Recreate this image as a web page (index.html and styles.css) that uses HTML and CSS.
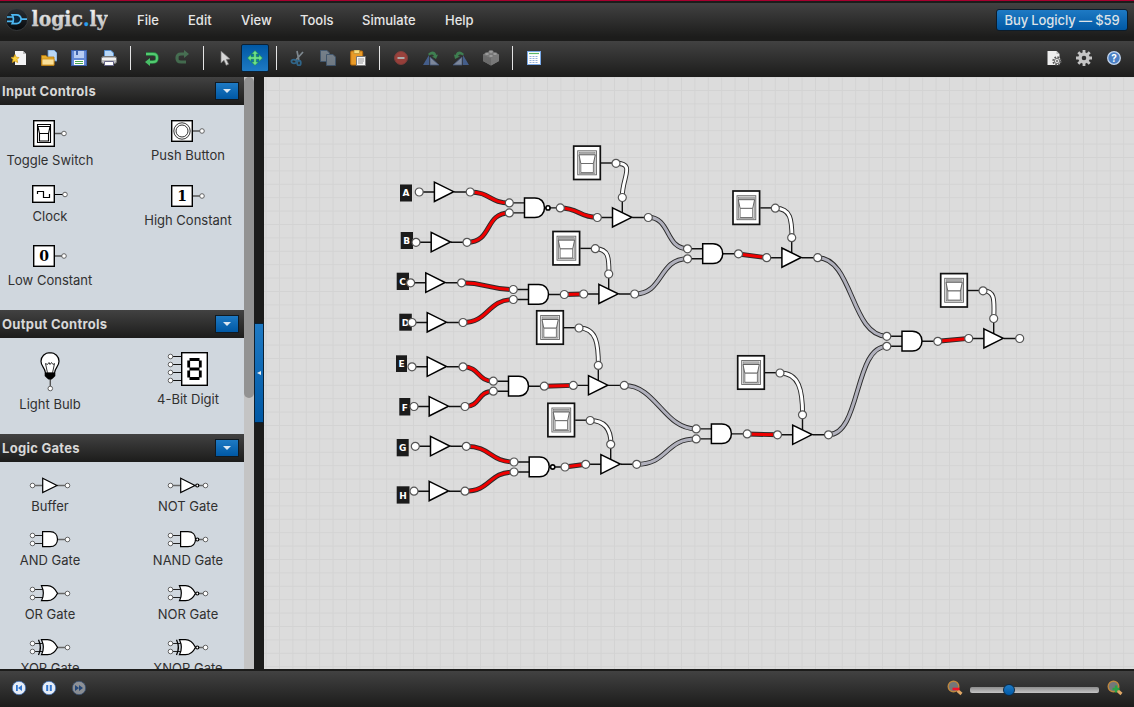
FILE: index.html
```html
<!DOCTYPE html>
<html lang="en">
<head>
<meta charset="utf-8">
<title>Logicly</title>
<link rel="stylesheet" href="styles.css">
</head>
<body>
<svg class="defs" width="0" height="0">
  <defs>
    <linearGradient id="silver" x1="0" y1="0" x2="0" y2="1"><stop offset="0" stop-color="#ffffff"/><stop offset="1" stop-color="#b0b0b0"/></linearGradient>
    <linearGradient id="ink" x1="0" y1="0" x2="0" y2="1"><stop offset="0" stop-color="#2a3036"/><stop offset="1" stop-color="#05080b"/></linearGradient>
    <circle id="port" r="4" fill="#fff" stroke="#555" stroke-width="1.2"/>
    <g id="buffer">
      <path class="lead" d="M0 0H16M35 0H51"/>
      <path class="body" d="M15.2 -9.9L34.5 -.3L15.2 9.5Z"/>
      <use href="#port"/><use href="#port" x="51"/>
    </g>
    <g id="tristate">
      <path class="lead" d="M25 -20V-4M0 0H16M35 0H51"/>
      <path class="body" d="M15.2 -9.7L34.500 -.2L15.2 9.5Z"/>
      <use href="#port"/><use href="#port" x="51"/><use href="#port" x="25" y="-20"/>
    </g>
    <g id="and">
      <path class="lead" d="M0 -5H16M0 5H16M35 0H51"/>
      <path class="body" d="M15.2 -10H25.500C31.500 -10 35.2 -6 35.2 -.2S31.500 9.7 25.500 9.7H15.2Z"/>
      <use href="#port" y="-5"/><use href="#port" y="5"/><use href="#port" x="51"/>
    </g>
    <g id="nand">
      <use href="#and"/>
      <circle cx="38.700" r="2.1" fill="#fff" stroke="#000" stroke-width="1.6"/>
    </g>
    <g id="switch">
      <path class="lead" d="M-15 -.3H0"/>
      <rect x="-42.300" y="-17.200" width="26.600" height="33.400" fill="#fff" stroke="#111" stroke-width="1.700"/>
      <rect x="-38.300" y="-12.500" width="18.800" height="24" fill="#f2f2f2" stroke="#666" stroke-width=".9"/>
      <rect x="-36.700" y="-11" width="15.600" height="21" fill="#fff" stroke="#777" stroke-width=".8"/>
      <path d="M-36.500 -10.800H-21.200V-8.500H-36.500Z" fill="#aaa"/>
      <path d="M-37 -8.500H-20.700L-22.600 .2H-35.200Z" fill="#fff" stroke="#555" stroke-width=".9"/>
      <path d="M-35.200 .2H-22.600V9.300H-35.200Z" fill="#fff" stroke="#666" stroke-width=".9"/>
      <use href="#port"/>
    </g>
    <g id="dot"><circle r="2.3" fill="#fff" stroke="#555" stroke-width=".9"/></g>
    <g id="pins2"><path d="M2 4.500H13M2 12.500H13" stroke="#222" fill="none"/><use href="#dot" x="2.500" y="4.500"/><use href="#dot" x="2.500" y="12.500"/></g>
    <g id="pinout"><path d="M27 8.500H36" stroke="#666" stroke-width="1.500"/><use href="#dot" x="37.500" y="8.500"/></g>
    <g id="bub"><circle cx="29.300" cy="8.500" r="1.500" fill="#fff" stroke="#000" stroke-width="1.200"/></g>
    <path id="orbody" d="M11.500 .7H17.500C22.500 .7 25.500 4.500 27.500 8.200C25.500 12.500 22.500 15.700 17.500 15.700H11.500C14 11 14 6 11.500 .7Z" fill="#fff" stroke="#000" stroke-width="1.200"/>
    <pattern id="grid" x="279" y="90" width="13.400" height="13.400" patternUnits="userSpaceOnUse"><path d="M.5 0V13.400M0 .5H13.400" stroke="#d3d3d3" stroke-width="1" fill="none"/></pattern>
    <g id="wires-red">
      <path d="M470 192C490 192 490 203 509.300 203M467 242.300C493 242.300 484 213 509.300 213M560 208C579 208 579 217.300 597.300 217.300"/>
      <path d="M461.500 282.800C487 282.800 488 289.500 513.300 289.500M463 322.500C489 322.500 487 299.500 513.300 299.500M564.300 294.500L583.700 294"/>
      <path d="M463 366.800C480 366.800 477 381.200 493.300 381.200M465 406.500C481 406.500 477 391.200 493.300 391.200M544 386.300L573.300 385.400"/>
      <path d="M466.300 446.300C491 446.300 490 462 514 462M465 491.200C491 491.200 488 472 514 472M565 467L585.700 464.300"/>
      <path d="M738.300 254L766.700 257.700M747 434L777.500 434.800M937.700 341.300L968.700 338.400"/>
    </g>
    <g id="wires-gray">
      <path d="M648 217.300C671 217.300 665 248.700 687.600 248.700M634.600 294C664 294 658 258.700 687.600 258.700"/>
      <path d="M624.300 385.400C656 385.400 664 428.900 696 428.900M636.600 464.300C668 464.300 665 438.900 696 438.900"/>
      <path d="M817.500 257.700C853 257.700 851 336.300 886.800 336.300M828.300 434.800C861 434.800 854 346.400 886.800 346.400"/>
    </g>
    <g id="wires-white">
      <path d="M616 163.300C636 163.300 622 177 622.200 197.500M595.300 248.700C609 248.700 609 258 609 274M579 328C597 328 598.400 345 598.400 365.400M590.200 420.500C606 420.500 611 431 611 444.300"/>
      <path d="M775.300 208.200C791 208.200 791.800 220 792 237.700M780 373C799 373 802.600 390 802.600 414.800M983 290.800C996 290.800 994 302 993.800 318.500"/>
    </g>
  </defs>
</svg>
<div class="app">
  <header class="menubar">
    <svg class="logo" width="104" height="30" viewBox="4 5 104 30">
      <circle cx="16.700" cy="19.500" r="11" fill="url(#ink)" stroke="#3d4042" stroke-width=".8"/>
      <g fill="none" stroke="#4db8f2" stroke-width="1.700"><path d="M7 17H13M7 21.300H13M21 19.200H27"/><path d="M12.200 14.800H16.500C19.300 14.800 20.800 16.800 21.200 19.200C20.800 21.600 19.300 23.600 16.500 23.600H12.200C13.800 20.600 13.800 17.600 12.200 14.800Z" fill="#0a2740"/></g>
      <text class="logo-text" x="31.500" y="26" textLength="76" lengthAdjust="spacingAndGlyphs">logic<tspan fill="#2aa0ee" stroke="#2aa0ee">.</tspan>ly</text>
    </svg>
    <nav class="menu"><span class="m-file">File</span><span class="m-edit">Edit</span><span class="m-view">View</span><span class="m-tools">Tools</span><span class="m-sim">Simulate</span><span class="m-help">Help</span></nav>
    <button class="buy">Buy Logicly — $59</button>
  </header>

  <div class="toolbar">
    <span class="tool"><svg width="16" height="16"><path d="M4 1H12L15 4V15H4Z" fill="#f3f3f3"/><path d="M12 1V4H15" fill="#bbb"/><path d="M4 4.500L5.200 7.200L8 7.500L6 9.500L6.700 12.500L4 11L1.300 12.500L2 9.500L0 7.500L2.800 7.200Z" fill="#ffd640" stroke="#d19a12" stroke-width=".7"/></svg></span>
    <span class="tool"><svg width="16" height="16"><path d="M7 0H13L16 3V11H7Z" fill="#b8d6f5" stroke="#5b8fcd" stroke-width=".8"/><path d="M.5 5.500H5L6.500 7H13V15.500H.5Z" fill="#e5ad2b" stroke="#b97a10" stroke-width=".8"/><path d="M1 9H13V15H1Z" fill="#fbe19a" stroke="#c98b17" stroke-width=".8"/></svg></span>
    <span class="tool"><svg width="16" height="16"><rect x=".5" y=".5" width="15" height="15" fill="#6489d6" stroke="#3c61ac"/><path d="M3 1H13V8H3Z" fill="#b7ccf3"/><path d="M5 1H7V5H5Z" fill="#3c61ac"/><path d="M3 10H13V15H3Z" fill="#fff"/><path d="M4 11.500H12M4 13.500H12" stroke="#4aa653"/></svg></span>
    <span class="tool"><svg width="16" height="16"><path d="M3.500 .5H10L12.500 3V8H3.500Z" fill="#b9d8f7" stroke="#5991d1"/><rect x=".5" y="6.500" width="15" height="7" rx="2" fill="#bbb" stroke="#777"/><path d="M1 9H15" stroke="#eee" stroke-width="2"/><path d="M3.500 11.500H12.500V15.500H3.500Z" fill="#fff" stroke="#668"/></svg></span>
    <i class="sep"></i>
    <span class="tool"><svg width="16" height="16"><path d="M2 4H9C12.500 4 13 5.500 13 8S12.500 12 9 12H5" fill="none" stroke="#2a9448" stroke-width="3.400"/><path d="M2 4H9C12.500 4 13 5.500 13 8S12.500 12 9 12H5" fill="none" stroke="#53ca70" stroke-width="2"/><path d="M1 12L6 8V16Z" fill="#48be66"/></svg></span>
    <span class="tool off"><svg width="16" height="16"><path d="M12 12H7C3.500 12 3 10.500 3 8S3.500 4 7 4H11" fill="none" stroke="#5aa870" stroke-width="3.200"/><path d="M15 4L10 0V8Z" fill="#5aa870"/></svg></span>
    <i class="sep"></i>
    <span class="tool"><svg width="16" height="16"><path d="M4 1V13L7 10.300L9.200 15.300L11.600 14.200L9.300 9.400L13 9Z" fill="#d7d7d7" stroke="#777" stroke-width=".7"/></svg></span>
    <span class="tool"><span class="active"><svg width="16" height="16"><path d="M8 .5L11.500 4H9.300V6.700H12V4.500L15.500 8L12 11.500V9.300H9.300V12H11.500L8 15.500L4.500 12H6.700V9.300H4V11.500L.5 8L4 4.500V6.700H6.700V4H4.500Z" fill="#6fe088" stroke="#16864a" stroke-width=".6"/></svg></span></span>
    <i class="sep"></i>
    <span class="tool off"><svg width="16" height="16"><path d="M7 1L8.800 10M13 2L5 11" stroke="#c9dcea" stroke-width="1.700"/><g fill="none" stroke="#35a0e8" stroke-width="1.800"><ellipse cx="4" cy="11.500" rx="2.600" ry="1.800"/><ellipse cx="9" cy="13" rx="1.800" ry="2.400"/></g></svg></span>
    <span class="tool off"><svg width="16" height="16"><g fill="#b4c8dc" stroke="#547da9"><path d="M.5 .5H7L9.500 3V11.500H.5Z"/><path d="M6.500 4.500H13L15.500 7V15.500H6.500Z"/></g></svg></span>
    <span class="tool"><svg width="16" height="16"><rect x=".7" y="1" width="12" height="14" rx="1" fill="#e99b28" stroke="#b56b0b"/><rect x="4" y="0" width="5.500" height="3.500" fill="#f8dd80" stroke="#b18c32" stroke-width=".7"/><path d="M6.500 6.500H15.500V15.500H6.500Z" fill="#f5f5f5" stroke="#777"/><path d="M8 9H14M8 11H14M8 13H13" stroke="#999"/></svg></span>
    <i class="sep"></i>
    <span class="tool off2"><svg width="16" height="16"><circle cx="8" cy="8" r="6.500" fill="#d04a42" stroke="#a64541"/><path d="M4.500 8H11.500" stroke="#eee" stroke-width="2"/></svg></span>
    <span class="tool off2"><svg width="16" height="16"><path d="M0 15L6 5V15Z" fill="#5279bd"/><path d="M7 15V7L16 15Z" fill="#a9b9d7" stroke="#526fa6" stroke-width=".8"/><path d="M5 4C8 .5 12 .5 13.500 5L15 4.500L13 9L9 6.500L11 6C10 4 8 4 6.500 5.500Z" fill="#45a660"/></svg></span>
    <span class="tool off2"><svg width="16" height="16"><path d="M16 15L10 5V15Z" fill="#5279bd"/><path d="M9 15V7L0 15Z" fill="#a9b9d7" stroke="#526fa6" stroke-width=".8"/><path d="M11 4C8 .5 4 .5 2.500 5L1 4.500L2 9L7 6.500L5 6C6 4 8 4 9.500 5.500Z" fill="#45a660"/></svg></span>
    <span class="tool off2"><svg width="16" height="16"><path d="M0 4.500L8 1L16 4.500V11L8 15.500L0 11Z" fill="#aaa"/><path d="M0 4.500L8 8V15.500L0 11Z" fill="#8c8c8c"/><path d="M8 8L16 4.500V11L8 15.500Z" fill="#a2a2a2"/><g fill="#d2d2d2" stroke="#888" stroke-width=".6"><ellipse cx="8" cy="1.800" rx="2.300" ry="1.600"/><ellipse cx="4" cy="4" rx="2.300" ry="1.600"/><ellipse cx="12" cy="4" rx="2.300" ry="1.600"/><ellipse cx="8" cy="6" rx="2.300" ry="1.600"/></g></svg></span>
    <i class="sep"></i>
    <span class="tool"><svg width="16" height="16"><rect x="1.500" y="1.500" width="13" height="13" fill="#fff" stroke="#79a9e8"/><path d="M3 3.500H13" stroke="#5ab765" stroke-width="1.200"/><path d="M3.500 6.500H12.500M3.500 8.500H12.500M3.500 10.500H12.500M3.500 12.500H12.500" stroke="#88a8d6" stroke-dasharray="2 1" stroke-width=".9"/></svg></span>
    <div class="right-tools">
      <span class="tool"><svg width="16" height="16"><path d="M1.500 1H10.500L13.500 4V15H1.500Z" fill="#eee"/><path d="M10.500 1V4H13.500" fill="#bbb"/><circle cx="11" cy="11" r="3.700" fill="#eee" stroke="#555" stroke-width="2" stroke-dasharray="1.600 1.300"/><circle cx="11" cy="11" r="2.700" fill="#ddd" stroke="#777"/><circle cx="11" cy="11" r="1" fill="#666"/></svg></span>
      <span class="tool"><svg width="16" height="16"><circle cx="8" cy="8" r="4" fill="none" stroke="#c5c5c5" stroke-width="3.400"/><path d="M8 0V3M8 13V16M0 8H3M13 8H16M2.300 2.300L4.500 4.500M11.500 11.500L13.700 13.700M2.300 13.700L4.500 11.500M11.500 4.500L13.700 2.300" stroke="#c5c5c5" stroke-width="2.800"/></svg></span>
      <span class="tool"><svg width="16" height="16"><circle cx="8" cy="8" r="6.300" fill="#4a7fc4" stroke="#c4d6ee" stroke-width="1.300"/><text x="8" y="11.700" text-anchor="middle" class="qmark">?</text></svg></span>
    </div>
  </div>

  <main class="work">
    <aside class="palette">
      <h2 class="head">Input Controls<span class="drop"></span></h2>
      <div class="items">
        <div class="item"><svg width="34" height="27"><path d="M21 13.500H30" stroke="#555" stroke-width="1.500"/><rect x=".7" y=".7" width="20.600" height="25.600" fill="#fff" stroke="#000" stroke-width="1.400"/><path d="M4.500 4.500H17.500V22.500H4.500ZM4.500 6.500H17.500M5 6.500L6.500 13.500H15.500L17 6.500M6.500 13.500V21H15.500V13.500" fill="none" stroke="#000" stroke-width="1.100"/><use href="#dot" x="31" y="13.500"/></svg><span>Toggle Switch</span></div>
        <div class="item"><svg width="34" height="22"><path d="M21 11H30" stroke="#555" stroke-width="1.500"/><rect x=".7" y=".7" width="20.600" height="20.600" fill="#fff" stroke="#000" stroke-width="1.400"/><circle cx="11" cy="11" r="8.200" fill="none" stroke="#333"/><circle cx="11" cy="11" r="6" fill="none" stroke="#333"/><use href="#dot" x="31" y="11"/></svg><span>Push Button</span></div>
        <div class="item"><svg width="36" height="18"><path d="M22 9.500H32" stroke="#000"/><rect x=".7" y=".7" width="21.600" height="16.600" fill="#fff" stroke="#000" stroke-width="1.400"/><path d="M5.500 9V6.500H11.500V12.500H17.500V9" fill="none" stroke="#000" stroke-width="1.200"/><use href="#dot" x="33" y="9.500"/></svg><span>Clock</span></div>
        <div class="item"><svg width="34" height="22"><path d="M21 11H30" stroke="#555" stroke-width="1.500"/><rect x=".7" y=".7" width="20.600" height="20.600" fill="#fff" stroke="#000" stroke-width="1.400"/><text class="digit" x="11" y="16">1</text><use href="#dot" x="31" y="11"/></svg><span>High Constant</span></div>
        <div class="item"><svg width="34" height="22"><path d="M21 11H30" stroke="#555" stroke-width="1.500"/><rect x=".7" y=".7" width="20.600" height="20.600" fill="#fff" stroke="#000" stroke-width="1.400"/><text class="digit" x="11" y="16">0</text><use href="#dot" x="31" y="11"/></svg><span>Low Constant</span></div>
      </div>
      <h2 class="head">Output Controls<span class="drop"></span></h2>
      <div class="items outputs">
        <div class="item"><svg width="20" height="39" viewBox="0 0 20 39"><path d="M10.300 27V35" stroke="#555" stroke-width="1.400"/><path d="M10 .7C4.700 .7 1 4.500 1 9.300C1 14.500 5 15.500 5.500 21H14.500C15 15.500 19 14.500 19 9.300C19 4.500 15.300 .7 10 .7Z" fill="#fff" stroke="#000" stroke-width="1.200"/><path d="M7.500 21L5.500 11.500L7.500 12.500L9 10.500L10 12.500L11.500 10.500L13 12.500L14.500 11.500L12.500 21" fill="none" stroke="#333"/><path d="M4.700 20.700H15.300V24Q13 26.500 11.500 27.500H8.500Q7 26.500 4.700 24Z"/><use href="#dot" x="10.300" y="36.500"/></svg><span>Light Bulb</span></div>
        <div class="item"><svg width="40" height="34"><path d="M3 4.500H13M3 12.500H13M3 20.500H13M3 28.500H13" stroke="#111"/><rect x="13.700" y=".7" width="25.600" height="32.600" fill="#fff" stroke="#000" stroke-width="1.400"/><g stroke="#000" stroke-width="2.800"><path d="M21.500 7.500H31.500M21.500 17H31.500M21.500 26.500H31.500M20.700 8.500V15.500M32.300 8.500V15.500M20.700 18.500V25.500M32.300 18.500V25.500"/></g><use href="#dot" x="2.500" y="4.500"/><use href="#dot" x="2.500" y="12.500"/><use href="#dot" x="2.500" y="20.500"/><use href="#dot" x="2.500" y="28.500"/></svg><span>4-Bit Digit</span></div>
      </div>
      <h2 class="head">Logic Gates<span class="drop"></span></h2>
      <div class="items">
        <div class="item"><svg width="40" height="16"><path d="M2 8.500H13" stroke="#666" stroke-width="1.500"/><use href="#pinout"/><use href="#dot" x="2.500" y="8.500"/><path d="M12.700 1.200L27 8.500L12.700 15.500Z" fill="#fff" stroke="#000" stroke-width="1.200"/></svg><span>Buffer</span></div>
        <div class="item"><svg width="40" height="16"><path d="M2 8.500H13" stroke="#666" stroke-width="1.500"/><use href="#pinout"/><use href="#dot" x="2.500" y="8.500"/><path d="M12.700 1.200L27 8.500L12.700 15.500Z" fill="#fff" stroke="#000" stroke-width="1.200"/><use href="#bub"/></svg><span>NOT Gate</span></div>
        <div class="item"><svg width="40" height="16"><use href="#pins2"/><use href="#pinout"/><path d="M12.600 .6H20C25 .6 27.500 4 27.500 8.200S25 15.700 20 15.700H12.600Z" fill="#fff" stroke="#000" stroke-width="1.200"/></svg><span>AND Gate</span></div>
        <div class="item"><svg width="40" height="16"><use href="#pins2"/><use href="#pinout"/><path d="M12.600 .6H20C25 .6 27.500 4 27.500 8.200S25 15.700 20 15.700H12.600Z" fill="#fff" stroke="#000" stroke-width="1.200"/><use href="#bub"/></svg><span>NAND Gate</span></div>
        <div class="item"><svg width="40" height="16"><use href="#pins2"/><use href="#pinout"/><use href="#orbody"/></svg><span>OR Gate</span></div>
        <div class="item"><svg width="40" height="16"><use href="#pins2"/><use href="#pinout"/><use href="#orbody"/><use href="#bub"/></svg><span>NOR Gate</span></div>
        <div class="item"><svg width="40" height="16"><use href="#pins2"/><use href="#pinout"/><use href="#orbody"/><path d="M8.500 .7C11 6 11 11 8.500 16" fill="none" stroke="#000" stroke-width="1.300"/></svg><span>XOR Gate</span></div>
        <div class="item"><svg width="40" height="16"><use href="#pins2"/><use href="#pinout"/><use href="#orbody"/><path d="M8.500 .7C11 6 11 11 8.500 16" fill="none" stroke="#000" stroke-width="1.300"/><use href="#bub"/></svg><span>XNOR Gate</span></div>
      </div>
    </aside>
    <div class="scroll"><div class="thumb"></div></div>
    <div class="split"><div class="grip"></div></div>
    <svg class="canvas" width="870" height="592" viewBox="264 77 870 592">
      <rect x="264" y="77" width="870" height="592" fill="#dcdcdc"/>
      <rect x="264" y="77" width="870" height="592" fill="url(#grid)"/>
      <g class="tags">
        <rect x="400" y="184.500" width="12" height="17"/><text x="406" y="196">A</text>
        <rect x="400.700" y="232" width="12.300" height="17"/><text x="406.700" y="244">B</text>
        <rect x="396.700" y="272.700" width="12.300" height="17.300"/><text x="402.500" y="285.300">C</text>
        <rect x="399.300" y="313.700" width="12.500" height="17"/><text x="405.500" y="326.200">D</text>
        <rect x="396" y="355.300" width="11" height="16.700"/><text x="401.500" y="367.200">E</text>
        <rect x="399.300" y="398" width="11" height="17.500"/><text x="404.800" y="410.500">F</text>
        <rect x="396.700" y="439" width="12" height="17.300"/><text x="402.700" y="451">G</text>
        <rect x="396.700" y="486.300" width="12.800" height="17.300"/><text x="403" y="498.500">H</text>
      </g>
      <g class="edge"><use href="#wires-red"/><use href="#wires-gray"/><use href="#wires-white"/></g>
      <use class="core red" href="#wires-red"/>
      <use class="core gray" href="#wires-gray"/>
      <use class="core white" href="#wires-white"/>
      <use href="#buffer" x="419.200" y="192"/>
      <use href="#buffer" x="416" y="242.300"/>
      <use href="#buffer" x="410.600" y="282.800"/>
      <use href="#buffer" x="412" y="322.500"/>
      <use href="#buffer" x="412" y="366.800"/>
      <use href="#buffer" x="414" y="406.500"/>
      <use href="#buffer" x="415.300" y="446.300"/>
      <use href="#buffer" x="414" y="491.200"/>
      <use href="#nand" x="509.300" y="207.900"/>
      <use href="#and" x="513.300" y="294.500"/>
      <use href="#and" x="493.300" y="386.200"/>
      <use href="#nand" x="514" y="467"/>
      <use href="#and" x="687.500" y="253.800"/>
      <use href="#and" x="696.200" y="433.900"/>
      <use href="#and" x="886.800" y="341.300"/>
      <use href="#tristate" x="597.300" y="217.500"/>
      <use href="#tristate" x="583.700" y="294"/>
      <use href="#tristate" x="573.300" y="385.400"/>
      <use href="#tristate" x="585.700" y="464.300"/>
      <use href="#tristate" x="766.700" y="257.700"/>
      <use href="#tristate" x="777.500" y="434.800"/>
      <use href="#tristate" x="968.700" y="338.500"/>
      <use href="#switch" x="616" y="163.300"/>
      <use href="#switch" x="595.300" y="248.700"/>
      <use href="#switch" x="579" y="328"/>
      <use href="#switch" x="590.200" y="420.500"/>
      <use href="#switch" x="775.300" y="208.200"/>
      <use href="#switch" x="780" y="373"/>
      <use href="#switch" x="983" y="290.800"/>
    </svg>
  </main>

  <footer class="status">
    <span class="tool"><svg width="16" height="16"><circle cx="8" cy="8" r="6.700" fill="#e6edf7" stroke="#3d6fb5" stroke-width=".8"/><path d="M5 5V11H6.800V5ZM11 5V11L7 8Z" fill="#3276cf"/></svg></span>
    <span class="tool"><svg width="16" height="16"><circle cx="8" cy="8" r="6.700" fill="#e6edf7" stroke="#3d6fb5" stroke-width=".8"/><path d="M5.200 5H7.200V11H5.200ZM8.800 5H10.800V11H8.800Z" fill="#3276cf"/></svg></span>
    <span class="tool off"><svg width="16" height="16"><circle cx="8" cy="8" r="6.700" fill="#e6edf7" stroke="#3d6fb5" stroke-width=".8"/><path d="M4 5L8 8L4 11ZM8 5L12 8L8 11Z" fill="#1b5fc0"/></svg></span>
    <div class="zoomer">
      <svg width="16" height="16"><path d="M10.500 10.500L14.500 14" stroke="#e0a866" stroke-width="3"/><circle cx="6.500" cy="6.500" r="5.300" fill="#73777a" stroke="#bd873f" stroke-width="1.400"/><path d="M5.500 9H12.500" stroke="#f5112a" stroke-width="2.600"/></svg>
      <div class="track"><i class="knob"></i></div>
      <svg width="16" height="16"><path d="M10.500 10.500L14.500 14" stroke="#e0a866" stroke-width="3"/><circle cx="6.500" cy="6.500" r="5.300" fill="#73777a" stroke="#bd873f" stroke-width="1.400"/><path d="M5.500 9H12.500M9 5.500V12.500" stroke="#2ba345" stroke-width="2.400"/></svg>
    </div>
  </footer>
</div>
</body>
</html>
```
FILE: styles.css
```css
* { box-sizing: border-box; }
body { margin: 0; background: #1c1c1b; font-family: Inter, "Open Sans", sans-serif; overflow: hidden; }
.defs { position: absolute; }
.app { width: 1134px; height: 707px; display: flex; flex-direction: column; border-top: 1px solid #a8002f; }
.menubar { height: 40px; flex: none; border-top: 2px solid #1c1c1b; border-bottom: 4px solid #1c1c1b; background: linear-gradient(#424242, #1c1c1b); display: flex; align-items: center; padding: 0 6px 0 4px; }
.logo { display: block; }
.logo-text { font: bold 20px "DejaVu Serif", serif; fill: url(#silver); stroke: #d8d8d8; stroke-width: .3px; }
.menu { display: flex; flex: 1; margin-left: 29px; color: #e6e6e6; font-size: 13px; font-weight: 500; }
.menu span { flex: none; }
.m-file { width: 51px; }
.m-edit { width: 53px; }
.m-view { width: 59px; }
.m-tools { width: 62px; }
.m-sim { width: 83px; }
.buy { width: 132px; height: 22px; padding: 0; border: 1px solid #0c1d2c; border-radius: 3px; background: linear-gradient(#1e7ac4, #0058a4); color: #dde2e7; font: 500 13px Inter, sans-serif; letter-spacing: -.1px; white-space: nowrap; }
.toolbar { height: 36px; flex: none; display: flex; align-items: center; background: linear-gradient(#424242, #1c1c1b); padding: 0 5px 2px 4px; }
.tool { width: 30px; height: 28px; display: flex; align-items: center; justify-content: center; flex: none; }
.tool svg { display: block; }
.off { opacity: .5; }
.off2 { opacity: .65; }
.sep { width: 1px; height: 24px; margin: 0 6px; background: #e4e4e4; flex: none; }
.active { width: 28px; height: 28px; border: 1px solid #0d2133; border-radius: 2px; background: linear-gradient(#0058a4, #1e7ac4); display: flex; align-items: center; justify-content: center; }
.right-tools { display: flex; margin-left: auto; }
.qmark { font: bold 10px Inter, sans-serif; fill: #fff; }
.work { height: 592px; flex: none; display: flex; }
.palette { width: 244px; height: 592px; overflow: hidden; background: #d0d7de; }
.head { height: 28px; margin: 0; padding: 0 5px 0 2px; display: flex; align-items: center; justify-content: space-between; background: linear-gradient(#424242, #1c1c1b); color: #d8d8d8; font-size: 13px; font-weight: 700; letter-spacing: .28px; }
.drop { width: 24px; height: 18px; border: 1px solid #101a22; background: linear-gradient(#1e7ac4, #0058a4); display: flex; align-items: center; justify-content: center; }
.drop::before { content: ""; border: 4px solid transparent; border-top-color: #dde8f2; border-bottom: 0; }
.items { display: grid; grid-template-columns: 100px 100px; column-gap: 38px; row-gap: 16px; padding: 15px 0 21px; }
.outputs { padding: 14px 0 21px; }
.item { display: flex; flex-direction: column; align-items: center; gap: 5px; color: #303030; font-size: 13px; line-height: 17px; letter-spacing: 0; white-space: nowrap; }
.item svg { display: block; overflow: visible; }
.digit { font: bold 14px "DejaVu Serif", serif; text-anchor: middle; letter-spacing: 0; }
.scroll { width: 10px; background: #c4c4c4; }
.thumb { height: 321px; background: #929292; border-radius: 5px; }
.split { width: 10px; background: #1c1c1b; display: flex; align-items: flex-start; padding-top: 246px; }
.grip { width: 10px; height: 100px; border: 1px solid #0c2133; background: linear-gradient(#1e7ac4, #0058a4); display: flex; align-items: center; justify-content: center; }
.grip::before { content: ""; border: 2.500px solid transparent; border-right: 4px solid #eee; border-left: 0; }
.canvas { display: block; }
.lead { fill: none; stroke: #111; stroke-width: 1.400px; }
.body { fill: #fff; stroke: #000; stroke-width: 1.500px; }
.edge { fill: none; stroke: #2c2c2c; stroke-width: 4.900px; }
.tags rect { fill: #1b1b1b; }
.tags text { fill: #fff; font: bold 9px "DejaVu Sans", sans-serif; text-anchor: middle; }
.core { fill: none; stroke-width: 3px; }
.red { stroke: #f00000; }
.gray { stroke: #b0b0bc; }
.white { stroke: #fff; }
.status { height: 38px; flex: none; border-top: 2px solid #1c1c1b; background: linear-gradient(#424242, #1c1c1b); display: flex; align-items: center; padding: 0 12px 0 4px; }
.status .tool { margin-bottom: 2px; }
.zoomer { margin-left: auto; display: flex; align-items: center; gap: 8px; }
.zoomer svg { display: block; margin: -2px -1px 0 0; }
.track { width: 129px; height: 6px; margin-top: 2px; border-radius: 2px; background: linear-gradient(#8d8d8d, #c5c5c5); display: flex; align-items: center; padding-left: 33px; }
.knob { width: 12px; height: 12px; flex: none; border-radius: 50%; border: 1px solid #0b2b48; background: linear-gradient(#1e7ac4, #0058a4); }
```
